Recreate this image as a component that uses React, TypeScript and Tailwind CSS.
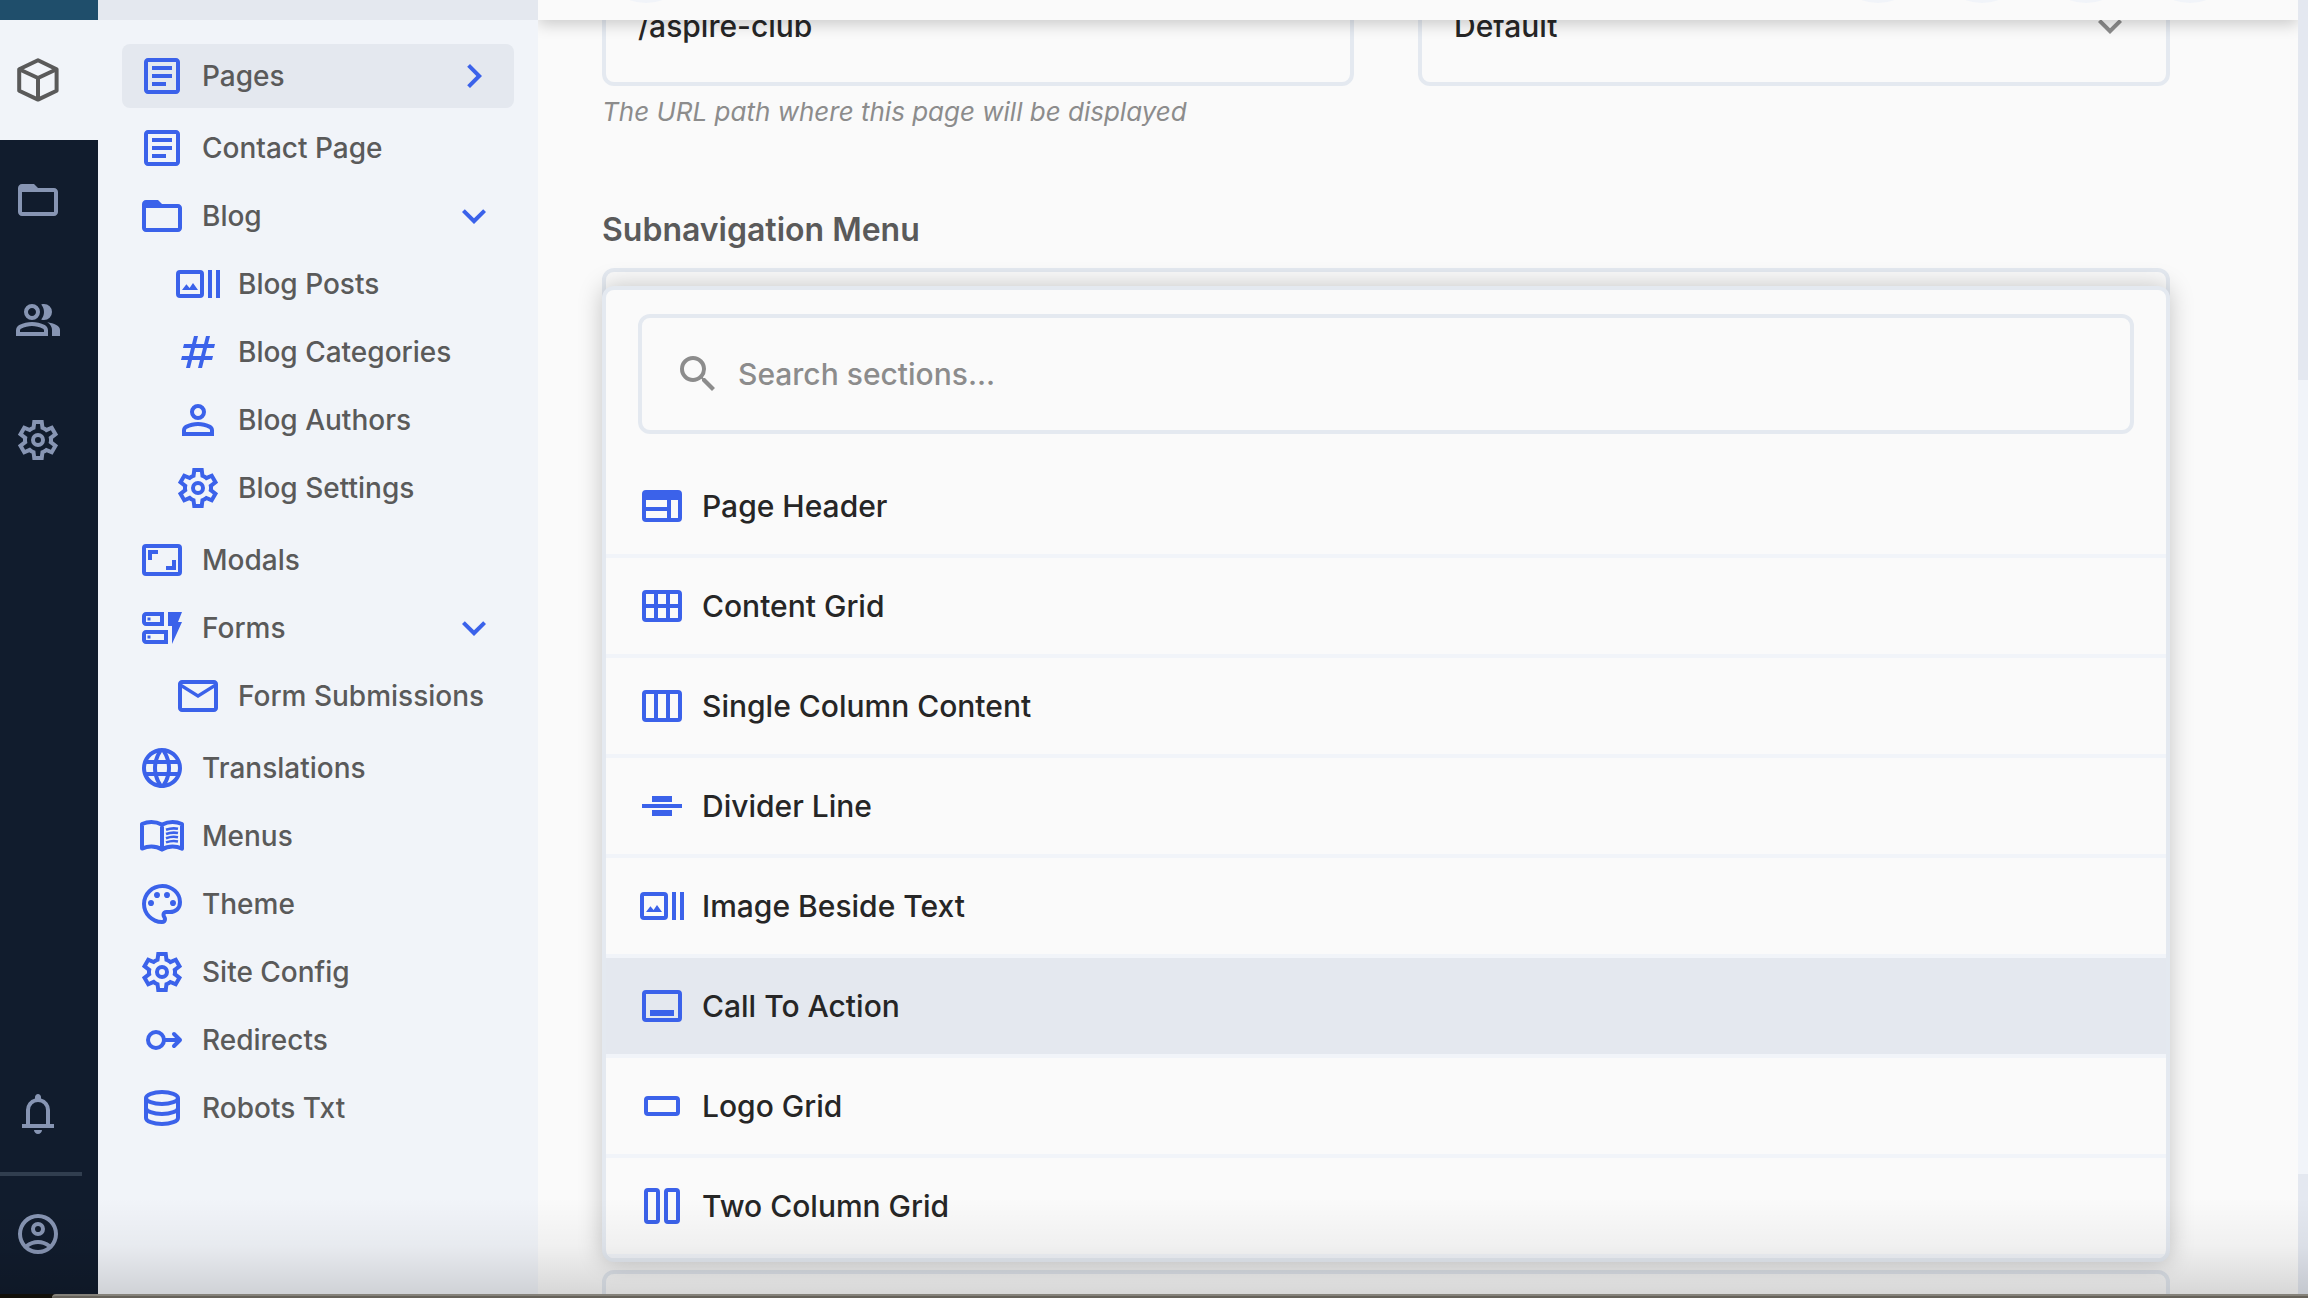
import type { ReactNode } from 'react';
import {
  MdChevronRight,
  MdFolderOpen,
  MdKeyboardArrowDown,
  MdLanguage,
  MdOutlineArticle,
  MdOutlineDynamicForm,
  MdSearch,
} from 'react-icons/md';

function Glyph({ children }: { children: ReactNode }) {
  return (
    <svg viewBox="0 0 24 24" fill="currentColor" aria-hidden="true" className="size-12 shrink-0">
      {children}
    </svg>
  );
}

function Line({ children }: { children: ReactNode }) {
  return (
    <svg
      viewBox="0 0 24 24"
      fill="none"
      stroke="currentColor"
      strokeWidth="2"
      aria-hidden="true"
      className="size-12 shrink-0"
    >
      {children}
    </svg>
  );
}

const Cube = () => (
  <Line>
    <g strokeLinejoin="round">
      <path d="M12 2.1 21.3 6.6V17.4L12 21.8 2.6 17.4V6.6Z" />
      <path d="M2.6 6.6 12 11 21.3 6.6M12 11V21.8" />
    </g>
  </Line>
);

const People = () => (
  <Glyph>
    <path d="M1 20v-2.8q0-.85.438-1.562T2.6 14.55q1.55-.775 3.15-1.162T9 13t3.25.388t3.15 1.162q.725.375 1.163 1.088T17 17.2V20zm18 0v-3q0-1.1-.612-2.113T16.65 13.15q1.275.15 2.4.513t2.1.887q.9.5 1.375 1.112T23 17v3zM9 12q-1.65 0-2.825-1.175T5 8t1.175-2.825T9 4t2.825 1.175T13 8t-1.175 2.825T9 12m10-4q0 1.65-1.175 2.825T15 12q-.275 0-.7-.062t-.7-.138q.675-.8 1.038-1.775T15 8t-.362-2.025T13.6 4.2q.35-.125.7-.163T15 4q1.65 0 2.825 1.175T19 8M3 18h12v-.8q0-.275-.137-.5t-.363-.35q-1.35-.675-2.725-1.012T9 15t-2.775.338T3.5 16.35q-.225.125-.363.35T3 17.2zm6-8q.825 0 1.413-.587T11 8t-.587-1.412T9 6t-1.412.588T7 8t.588 1.413T9 10" />
  </Glyph>
);

const Person = () => (
  <Glyph>
    <path d="M12 12q-1.65 0-2.825-1.175T8 8t1.175-2.825T12 4t2.825 1.175T16 8t-1.175 2.825T12 12m-8 8v-2.8q0-.85.438-1.562T5.6 14.55q1.55-.775 3.15-1.162T12 13t3.25.388t3.15 1.162q.725.375 1.163 1.088T20 17.2V20zm2-2h12v-.8q0-.275-.137-.5t-.363-.35q-1.35-.675-2.725-1.012T12 15t-2.775.338T6.5 16.35q-.225.125-.363.35T6 17.2zm6-8q.825 0 1.413-.587T14 8t-.587-1.412T12 6t-1.412.588T10 8t.588 1.413T12 10" />
  </Glyph>
);

const Gear = () => (
  <Glyph>
    <path
      fillRule="evenodd"
      d="m9.25 22l-.4-3.2q-.325-.125-.612-.3t-.563-.375L4.7 19.375l-2.75-4.75l2.575-1.95Q4.5 12.5 4.5 12.338v-.675q0-.163.025-.338L1.95 9.375l2.75-4.75l2.975 1.25q.275-.2.575-.375t.6-.3l.4-3.2h5.5l.4 3.2q.325.125.613.3t.562.375l2.975-1.25l2.75 4.75l-2.575 1.95q.025.175.025.338v.674q0 .163-.05.338l2.575 1.95l-2.75 4.75l-2.95-1.25q-.275.2-.575.375t-.6.3l-.4 3.2zM11 20h1.975l.35-2.65q.775-.2 1.438-.587t1.212-.938l2.475 1.025l.975-1.7l-2.15-1.625q.125-.35.175-.737T17.5 12t-.05-.787t-.175-.738l2.15-1.625l-.975-1.7l-2.475 1.05q-.55-.575-1.212-.962t-1.438-.588L13 4h-1.975l-.35 2.65q-.775.2-1.437.588t-1.213.937L5.55 7.15l-.975 1.7l2.15 1.6q-.125.375-.175.75t-.05.8q0 .4.05.775t.175.75l-2.15 1.625l.975 1.7l2.475-1.05q.55.575 1.213.963t1.437.587zM12 8.5a3.5 3.5 0 1 0 0 7a3.5 3.5 0 1 0 0-7zM12 10.5a1.5 1.5 0 1 0 0 3a1.5 1.5 0 1 0 0-3z"
    />
  </Glyph>
);

const Bell = () => (
  <Glyph>
    <path d="M4 19v-2h2v-7q0-2.075 1.25-3.687T10.5 4.2v-.7q0-.625.438-1.062T12 2t1.063.438T13.5 3.5v.7q2 .5 3.25 2.113T18 10v7h2v2zm8 3q-.825 0-1.412-.587T10 20h4q0 .825-.587 1.413T12 22m-4-5h8v-7q0-1.65-1.175-2.825T12 6T9.175 7.175T8 10z" />
  </Glyph>
);

const Account = () => (
  <Glyph>
    <path d="M5.85 17.1q1.275-.975 2.85-1.537T12 15t3.3.563t2.85 1.537q.875-1.025 1.363-2.325T20 12q0-3.325-2.337-5.663T12 4T6.337 6.338T4 12q0 1.475.488 2.775T5.85 17.1M12 13q-1.475 0-2.488-1.012T8.5 9.5t1.013-2.488T12 6t2.488 1.013T15.5 9.5t-1.012 2.488T12 13m0 9q-2.075 0-3.9-.788t-3.175-2.137T2.788 15.9T2 12t.788-3.9t2.137-3.175T8.1 2.788T12 2t3.9.788t3.175 2.137T21.213 8.1T22 12t-.788 3.9t-2.137 3.175t-3.175 2.138T12 22m0-2q1.325 0 2.5-.387t2.15-1.113q-.975-.725-2.15-1.112T12 17t-2.5.388T7.35 18.5q.975.725 2.15 1.113T12 20m0-9q.65 0 1.075-.425T13.5 9.5t-.425-1.075T12 8t-1.075.425T10.5 9.5t.425 1.075T12 11" />
  </Glyph>
);

const Hash = () => (
  <Glyph>
    <path
      fillRule="evenodd"
      d="M6 20l1-4H3.5l.5-2h3.5l1-4h-4l.5-2h4l1-4h2l-1 4h4l1-4h2l-1 4h3.5l-.5 2h-3.5l-1 4h4l-.5 2h-4l-1 4h-2l1-4H9l-1 4zM9.5 14h4l1-4h-4z"
    />
  </Glyph>
);

const ImageText = () => (
  <Line>
    <rect x="2" y="6" width="12" height="12" rx="1" />
    <path d="M18 5v14M22 5v14" />
    <path stroke="none" fill="currentColor" d="M4 15l2.2-2.9 1.6 1.9 1.7-2.5L12 15z" />
  </Line>
);

const Frame = () => <rect x="3" y="5" width="18" height="14" rx="1" />;

const Aspect = () => (
  <Line>
    <Frame />
    <path d="M6 12V8h4M18 12v4h-4" />
  </Line>
);

const Mail = () => (
  <Glyph>
    <path d="M4 20q-.825 0-1.412-.587T2 18V6q0-.825.588-1.412T4 4h16q.825 0 1.413.588T22 6v12q0 .825-.587 1.413T20 20zm8-7L4 8v10h16V8zm0-2l8-5H4zM4 8V6v12z" />
  </Glyph>
);

const Book = () => (
  <Line>
    <path
      strokeLinejoin="round"
      d="M12 6.3C10.4 5.5 8.6 5 6.7 5 5 5 3.4 5.4 2 6v12.3c1.4-.6 3-1 4.7-1 1.9 0 3.7.5 5.3 1.5 1.6-1 3.4-1.5 5.3-1.5 1.7 0 3.3.4 4.7 1V6c-1.4-.6-3-1-4.7-1-1.9 0-3.7.5-5.3 1.3v12.5"
    />
    <path
      strokeWidth="1.3"
      d="M14 8.9c1.9-.7 4-.9 6-.5M14 11c1.9-.7 4-.9 6-.5M14 13.1c1.9-.7 4-.9 6-.5M14 15.2c1.9-.7 4-.9 6-.5"
    />
  </Line>
);

const Palette = () => (
  <Glyph>
    <path
      fillRule="evenodd"
      d="M12 22q-2.05 0-3.875-.788t-3.187-2.15t-2.15-3.187T2 12q0-2.075.813-3.9t2.2-3.175T8.25 2.788T12.2 2q2 0 3.775.688t3.113 1.9t2.125 2.875T22 11.05q0 2.875-1.75 4.413T16 17h-1.85q-.225 0-.312.125t-.088.275q0 .3.375.863t.375 1.287q0 1.25-.687 1.85T12 22M6.5 13q.65 0 1.075-.425T8 11.5t-.425-1.075T6.5 10t-1.075.425T5 11.5t.425 1.075T6.5 13m3-4q.65 0 1.075-.425T11 7.5t-.425-1.075T9.5 6t-1.075.425T8 7.5t.425 1.075T9.5 9m5 0q.65 0 1.075-.425T16 7.5t-.425-1.075T14.5 6t-1.075.425T13 7.5t.425 1.075T14.5 9m3 4q.65 0 1.075-.425T19 11.5t-.425-1.075T17.5 10t-1.075.425T16 11.5t.425 1.075T17.5 13M12 20q.225 0 .363-.125t.137-.325q0-.35-.375-.825T11.75 17.3q0-1.05.725-1.675T14.25 15H16q1.65 0 2.825-.962T20 11.05q0-3.025-2.312-5.038T12.2 4Q8.8 4 6.4 6.325T4 12q0 3.325 2.338 5.663T12 20"
    />
  </Glyph>
);

const Redirect = () => (
  <Line>
    <circle cx="9" cy="12" r="4" />
    <path d="M13 12h8M18 9l3 3-3 3" strokeLinecap="round" strokeLinejoin="round" />
  </Line>
);

const Database = () => (
  <Line>
    <ellipse cx="12" cy="7" rx="8" ry="3" />
    <path d="M4 7v10c0 1.66 3.6 3 8 3s8-1.34 8-3V7M4 12c0 1.66 3.6 3 8 3s8-1.34 8-3" />
  </Line>
);

const PageHeader = () => (
  <Glyph>
    <path
      fillRule="evenodd"
      d="M4 4h16a2 2 0 0 1 2 2v12a2 2 0 0 1-2 2H4a2 2 0 0 1-2-2V6a2 2 0 0 1 2-2zM4 9v3.5h10.5V9zM4 14.5V18h10.5v-3.5zM16.5 9v9H20V9z"
    />
  </Glyph>
);

const Grid = () => (
  <Line>
    <Frame />
    <path d="M9 5v14M15 5v14M3 12h18" />
  </Line>
);

const Columns = () => (
  <Line>
    <Frame />
    <path d="M9 5v14M15 5v14" />
  </Line>
);

const Divider = () => (
  <Glyph>
    <path d="M2 11h20v2H2zM7 7h10v3H7zM7 14h10v3H7z" />
  </Glyph>
);

const CallToAction = () => (
  <Line>
    <Frame />
    <path stroke="none" fill="currentColor" d="M6 14h12v3H6z" />
  </Line>
);

const Logo = () => (
  <Line>
    <rect x="4" y="8" width="16" height="8" rx="1" />
  </Line>
);

const TwoColumns = () => (
  <Line>
    <rect x="4" y="4" width="6" height="16" rx="1" />
    <rect x="14" y="4" width="6" height="16" rx="1" />
  </Line>
);

type NavItem = {
  label: string;
  icon: ReactNode;
  active?: boolean;
  open?: boolean;
  children?: NavItem[];
};

const nav: NavItem[] = [
  { label: 'Pages', icon: <MdOutlineArticle size={48} />, active: true },
  { label: 'Contact Page', icon: <MdOutlineArticle size={48} /> },
  {
    label: 'Blog',
    icon: <MdFolderOpen size={48} />,
    open: true,
    children: [
      { label: 'Blog Posts', icon: <ImageText /> },
      { label: 'Blog Categories', icon: <Hash /> },
      { label: 'Blog Authors', icon: <Person /> },
      { label: 'Blog Settings', icon: <Gear /> },
    ],
  },
  { label: 'Modals', icon: <Aspect /> },
  {
    label: 'Forms',
    icon: <MdOutlineDynamicForm size={48} />,
    open: true,
    children: [{ label: 'Form Submissions', icon: <Mail /> }],
  },
  { label: 'Translations', icon: <MdLanguage size={48} /> },
  { label: 'Menus', icon: <Book /> },
  { label: 'Theme', icon: <Palette /> },
  { label: 'Site Config', icon: <Gear /> },
  { label: 'Redirects', icon: <Redirect /> },
  { label: 'Robots Txt', icon: <Database /> },
];

const sections = [
  { label: 'Page Header', icon: <PageHeader /> },
  { label: 'Content Grid', icon: <Grid /> },
  { label: 'Single Column Content', icon: <Columns /> },
  { label: 'Divider Line', icon: <Divider /> },
  { label: 'Image Beside Text', icon: <ImageText /> },
  { label: 'Call To Action', icon: <CallToAction />, active: true },
  { label: 'Logo Grid', icon: <Logo /> },
  { label: 'Two Column Grid', icon: <TwoColumns /> },
];

function NavRow({ item }: { item: NavItem }) {
  return (
    <li className={item.active ? 'pb-1' : ''}>
      <a
        href="#"
        className={`flex h-16 items-center rounded-lg px-4 text-[28px] text-[#5a5a5a] ${
          item.active ? 'bg-[#e4e8ef]' : ''
        }`}
      >
        <span className="text-[#3b62ea]">{item.icon}</span>
        <span className="ml-4 whitespace-nowrap">{item.label}</span>
        {item.active && <MdChevronRight size={48} className="ml-auto text-[#3b62ea]" />}
        {item.open && <MdKeyboardArrowDown size={48} className="ml-auto text-[#3b62ea]" />}
      </a>
      {item.children && (
        <ul className="mt-1 flex flex-col gap-1 pb-1 pl-9">
          {item.children.map((c) => (
            <NavRow key={c.label} item={c} />
          ))}
        </ul>
      )}
    </li>
  );
}

function RailButton({ label, active, children }: { label: string; active?: boolean; children: ReactNode }) {
  return (
    <button
      type="button"
      aria-label={label}
      className={`flex h-30 w-full items-center pl-3.5 ${
        active ? 'bg-[#f1f4f9] text-[#5a5a5a]' : 'text-[#8795b3]'
      }`}
    >
      {children}
    </button>
  );
}

export default function App() {
  return (
    <div className="relative flex h-screen flex-col overflow-hidden bg-[#12100a] font-['Inter',sans-serif] font-[450]">
      <div className="flex min-h-0 flex-1">
        <nav aria-label="Primary" className="flex w-[98px] shrink-0 flex-col bg-[#111c2d]">
          <div className="h-5 bg-[#1f4e6b]" />
          <RailButton label="Content" active>
            <Cube />
          </RailButton>
          <RailButton label="Files">
            <MdFolderOpen size={48} />
          </RailButton>
          <RailButton label="Users">
            <People />
          </RailButton>
          <RailButton label="Settings">
            <Gear />
          </RailButton>
          <div className="mt-auto">
            <RailButton label="Notifications">
              <Bell />
            </RailButton>
            <hr className="-my-0.5 mr-4 border-t-4 border-[#313e4f]" />
            <RailButton label="Account">
              <Account />
            </RailButton>
          </div>
        </nav>

        <aside className="flex w-[440px] shrink-0 flex-col bg-[#f1f4f9]">
          <div className="h-5 shrink-0 bg-[#e4e8ef]" />
          <nav aria-label="Content" className="px-6 pt-6">
            <ul className="flex flex-col gap-1">
              {nav.map((item) => (
                <NavRow key={item.label} item={item} />
              ))}
            </ul>
          </nav>
        </aside>

        <main className="flex min-w-0 flex-1 flex-col overflow-hidden bg-[#fafafa]">
          <header className="z-10 flex h-5 shrink-0 items-end justify-between overflow-hidden bg-[#fafafa] px-15 pb-[17px] shadow-[0_4px_16px_rgba(0,0,0,0.2)]">
            <button type="button" aria-label="Back" className="size-24 shrink-0 rounded-full bg-[#f1f4f9]" />
            <div className="flex gap-2">
              <button type="button" aria-label="Preview" className="size-24 rounded-full bg-[#f1f4f9]" />
              <button type="button" aria-label="History" className="size-24 rounded-full bg-[#f1f4f9]" />
              <button type="button" aria-label="Duplicate" className="size-24 rounded-full bg-[#f1f4f9]" />
              <button type="button" aria-label="Delete" className="size-24 rounded-full bg-[#f1f4f9]" />
            </div>
          </header>

          <div className="min-h-0 flex-1 overflow-hidden pr-32 pl-16">
            <div className="-mt-[54px] grid grid-cols-2 gap-16">
              <div>
                <input
                  aria-label="Path"
                  aria-describedby="path-hint"
                  defaultValue="/aspire-club"
                  className="block h-30 w-full rounded-xl border-4 border-[#e4e9f0] px-8 text-[30px] text-[#262626] outline-none"
                />
                <p id="path-hint" className="mt-2 text-[26px] leading-9 text-[#8c8c8c] italic">
                  The URL path where this page will be displayed
                </p>
              </div>
              <div className="grid items-center self-start">
                <select
                  aria-label="Layout"
                  className="col-start-1 row-start-1 h-30 w-full appearance-none rounded-xl border-4 border-[#e4e9f0] px-8 text-[30px] text-[#262626] outline-none"
                >
                  <option>Default</option>
                </select>
                <MdKeyboardArrowDown
                  size={48}
                  className="pointer-events-none col-start-1 row-start-1 mr-9 justify-self-end text-[#8c8c8c]"
                />
              </div>
            </div>

            <h2 className="mt-20 text-[32px] leading-10 font-semibold text-[#5a5a5a]">Subnavigation Menu</h2>

            <div className="mt-[18px] grid">
              <div className="col-start-1 row-start-1 h-30 rounded-xl border-4 border-[#e4e9f0]" />
              <div className="z-10 col-start-1 row-start-1 mt-[18px] overflow-hidden rounded-xl border-4 border-[#e4e9f0] bg-[#fafafa] shadow-[0_0_24px_rgba(0,0,0,0.22)]">
                <div className="px-8 py-6">
                  <label className="flex h-30 items-center rounded-xl border-4 border-[#e4e9f0] px-8 text-[#8c8c8c]">
                    <MdSearch size={48} className="shrink-0" />
                    <input
                      type="text"
                      aria-label="Search sections"
                      placeholder="Search sections..."
                      className="ml-4 min-w-0 flex-1 bg-transparent text-[30px] outline-none placeholder:text-[#8c8c8c]"
                    />
                  </label>
                </div>
                <ul>
                  {sections.map((s) => (
                    <li key={s.label} className="border-b-4 border-[#f1f4f9]">
                      <button
                        type="button"
                        className={`flex h-24 w-full items-center px-8 text-[30px] text-[#262626] ${
                          s.active ? 'bg-[#e4e8ef]' : ''
                        }`}
                      >
                        <span className="text-[#3b62ea]">{s.icon}</span>
                        <span className="ml-4">{s.label}</span>
                      </button>
                    </li>
                  ))}
                </ul>
              </div>
            </div>

            <div className="mt-2 h-30 rounded-xl border-4 border-[#e4e9f0]" />
          </div>
        </main>

        <div className="flex w-2.5 shrink-0 flex-col bg-[#f1f4f9]">
          <div className="h-[380px] bg-[#e4e8f0]" />
          <div className="mt-auto h-30 bg-[#e4e8f0]" />
        </div>
      </div>

      <div className="pointer-events-none absolute inset-x-0 bottom-1 z-20 h-24 bg-gradient-to-b from-transparent via-black/4 to-black/14" />
      <div className="h-1 shrink-0 pl-13">
        <div className="h-full rounded-tl-xl border-t-2 border-[#85827a] bg-[#66625a]" />
      </div>
    </div>
  );
}
